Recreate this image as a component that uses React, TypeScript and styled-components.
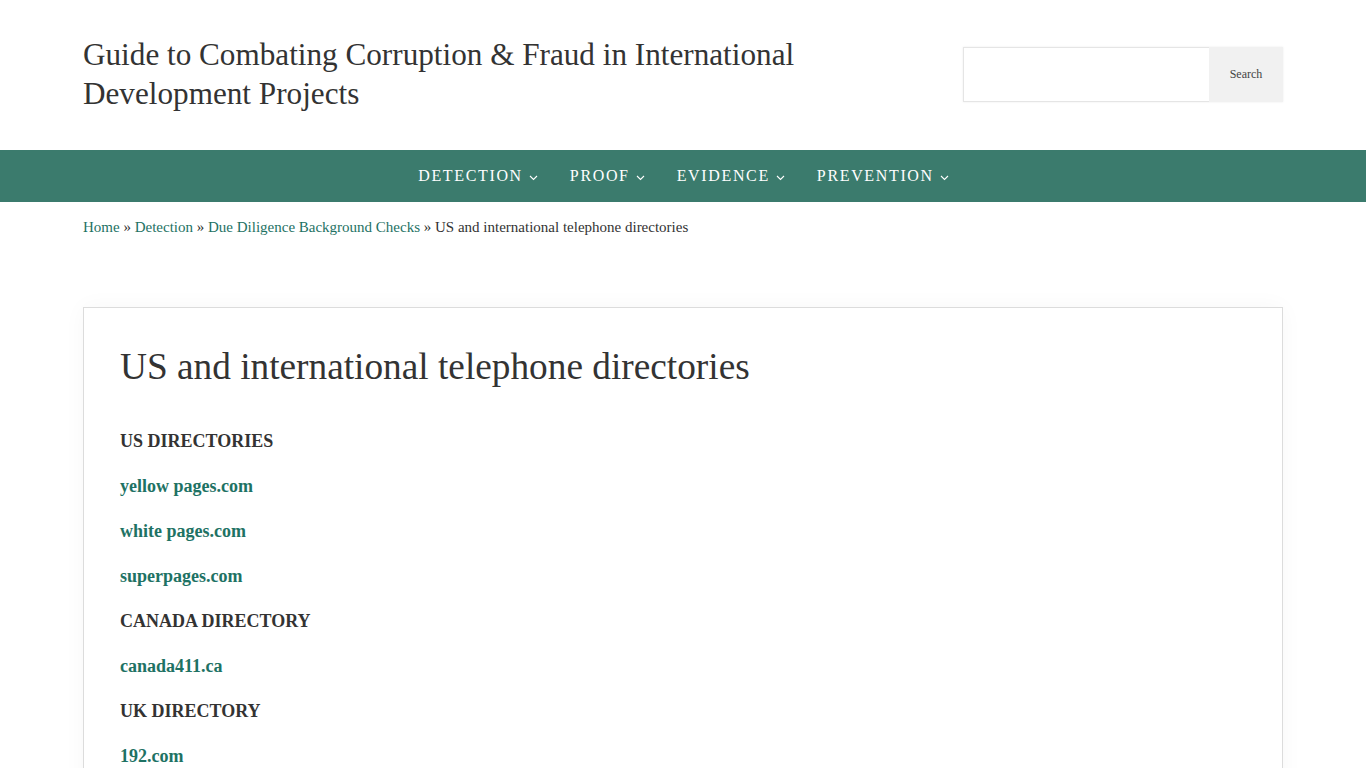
import React from "react";
import styled, { createGlobalStyle } from "styled-components";

const Global = createGlobalStyle`
  html, body { margin: 0; padding: 0; background: #fff; }
  body { font-family: "Liberation Serif", "Times New Roman", serif; color: #333; }
  * { box-sizing: border-box; }
`;

const Header = styled.header`
  width: 1200px;
  margin: 0 auto;
  height: 150px;
  display: flex;
  align-items: center;
  justify-content: space-between;
  padding-bottom: 2px;
`;

const SiteTitle = styled.a`
  font-size: 31.2px;
  line-height: 39px;
  color: #333;
  text-decoration: none;
  max-width: 760px;
`;

const SearchForm = styled.form`
  display: flex;
  height: 55px;
  box-shadow: 0 0 2px rgba(0, 0, 0, 0.08);
`;

const SearchInput = styled.input`
  width: 246px;
  height: 100%;
  border: 1px solid #e5e5e5;
  border-right: none;
  background: #fff;
  outline: none;
`;

const SearchButton = styled.button`
  width: 74px;
  height: 100%;
  border: none;
  background: #f1f1f1;
  color: #444;
  font-family: "Liberation Serif", serif;
  font-size: 12px;
  padding: 0;
`;

const Nav = styled.nav`
  background: #3b7b6d;
  height: 52px;
  display: flex;
  justify-content: center;
  align-items: center;
  gap: 32px;
  padding-left: 1px;
`;

const NavItem = styled.a`
  color: #fff;
  font-size: 16px;
  letter-spacing: 1.65px;
  text-transform: uppercase;
  text-decoration: none;
  display: flex;
  align-items: center;
  gap: 6px;
`;

const Chevron = () => (
  <svg width="9" height="6" viewBox="0 0 9 6" style={{ marginTop: 4 }}>
    <path d="M1 1 L4.5 4.5 L8 1" fill="none" stroke="#fff" strokeWidth="1.1" />
  </svg>
);

const Main = styled.main`
  width: 1200px;
  margin: 0 auto;
`;

const Crumbs = styled.div`
  font-size: 15px;
  line-height: 20px;
  padding-top: 15px;
  color: #333;
`;

const CrumbLink = styled.a`
  color: #1e7264;
  text-decoration: none;
`;

const Card = styled.article`
  margin-top: 70px;
  border: 1px solid #dcdcdc;
  box-shadow: 0 0 22px rgba(0, 0, 0, 0.035);
  padding: 36px 36px 40px;
  min-height: 500px;
`;

const Title = styled.h1`
  font-weight: normal;
  font-size: 37.3px;
  line-height: 46px;
  margin: 0 0 38px;
  color: #333;
`;

const Para = styled.p`
  margin: 0 0 18px;
  font-size: 18px;
  line-height: 27px;
  font-weight: bold;
  color: #333;
`;

const ParaLink = styled.a`
  color: #1e7264;
  text-decoration: none;
`;

const items: { text: string; link?: boolean }[] = [
  { text: "US DIRECTORIES" },
  { text: "yellow pages.com", link: true },
  { text: "white pages.com", link: true },
  { text: "superpages.com", link: true },
  { text: "CANADA DIRECTORY" },
  { text: "canada411.ca", link: true },
  { text: "UK DIRECTORY" },
  { text: "192.com", link: true },
];

export default function App() {
  return (
    <>
      <Global />
      <Header>
        <SiteTitle href="#">Guide to Combating Corruption &amp; Fraud in International Development Projects</SiteTitle>
        <SearchForm onSubmit={(e) => e.preventDefault()}>
          <SearchInput type="text" />
          <SearchButton type="submit">Search</SearchButton>
        </SearchForm>
      </Header>
      <Nav>
        {["Detection", "Proof", "Evidence", "Prevention"].map((n) => (
          <NavItem key={n} href="#">
            {n}
            <Chevron />
          </NavItem>
        ))}
      </Nav>
      <Main>
        <Crumbs>
          <CrumbLink href="#">Home</CrumbLink> » <CrumbLink href="#">Detection</CrumbLink> »{" "}
          <CrumbLink href="#">Due Diligence Background Checks</CrumbLink> » US and international telephone directories
        </Crumbs>
        <Card>
          <Title>US and international telephone directories</Title>
          {items.map((it) => (
            <Para key={it.text}>{it.link ? <ParaLink href="#">{it.text}</ParaLink> : it.text}</Para>
          ))}
        </Card>
      </Main>
    </>
  );
}
